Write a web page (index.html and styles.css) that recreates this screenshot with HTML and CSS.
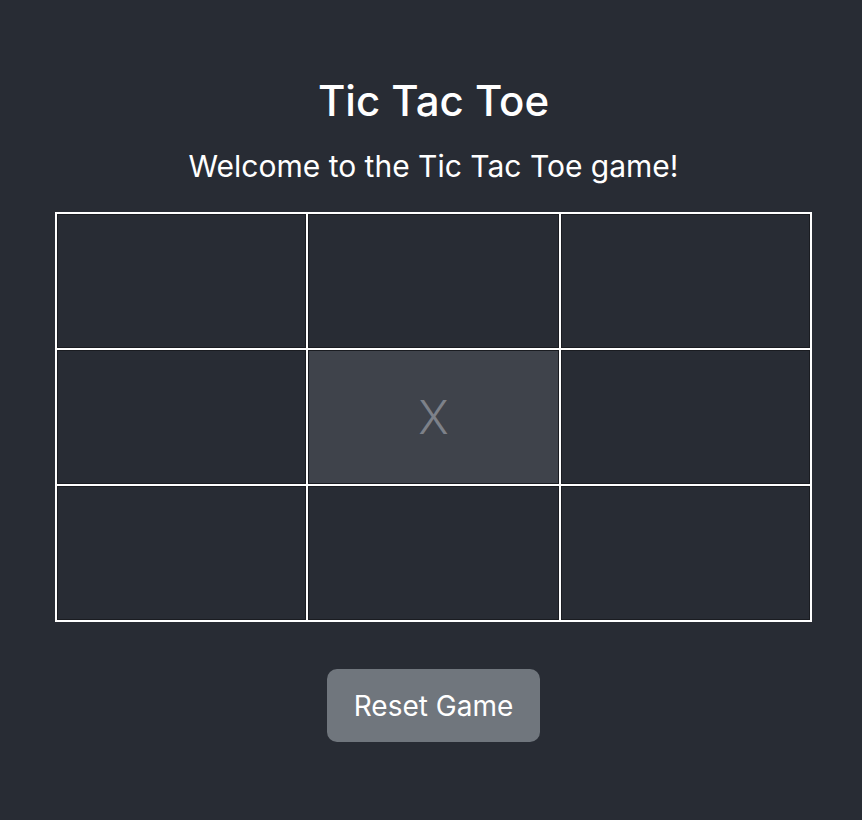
FILE: index.html
```html
<!DOCTYPE html>
<html>
<head>
<meta charset="utf-8">
<link rel="stylesheet" href="styles.css">
</head>
<body>
<div class="app">
  <h1 class="title">Tic Tac Toe</h1>
  <p class="subtitle">Welcome to the Tic Tac Toe game!</p>
  <div class="board">
    <div class="cell"></div>
    <div class="cell"></div>
    <div class="cell"></div>
    <div class="cell"></div>
    <div class="cell active">X</div>
    <div class="cell"></div>
    <div class="cell"></div>
    <div class="cell"></div>
    <div class="cell"></div>
  </div>
  <button class="reset">Reset Game</button>
</div>
</body>
</html>
```

FILE: styles.css
```css
html, body {
  margin: 0;
  padding: 0;
  background: #282c34;
}
body {
  font-family: Inter, "Open Sans", sans-serif;
  color: #ffffff;
}
.app {
  width: 757px;
  margin-left: 55px;
  display: flex;
  flex-direction: column;
  align-items: center;
}
.title {
  margin: 76px 0 0;
  font-size: 42px;
  font-weight: 500;
  line-height: 50px;
}
.subtitle {
  margin: 22px 0 0;
  font-size: 30px;
  font-weight: 400;
  line-height: 36px;
}
.board {
  margin-top: 28px;
  width: 757px;
  display: grid;
  grid-template-columns: 251px 253px 251px;
  grid-template-rows: 136px 136px 136px;
  border: 1px solid #ffffff;
  box-sizing: border-box;
}
.cell {
  border: 1px solid #ffffff;
  box-shadow: inset 0 0 0 1px #1a1c21;
  display: flex;
  align-items: center;
  justify-content: center;
  font-size: 46px;
  font-weight: 300;
  color: #7d8189;
}
.cell.active {
  background: #3f434b;
}
.reset {
  margin-top: 47px;
  width: 213px;
  height: 73px;
  border: none;
  border-radius: 10px;
  background: #70767d;
  color: #ffffff;
  font-family: Inter, "Open Sans", sans-serif;
  font-size: 28px;
  font-weight: 400;
}
```
